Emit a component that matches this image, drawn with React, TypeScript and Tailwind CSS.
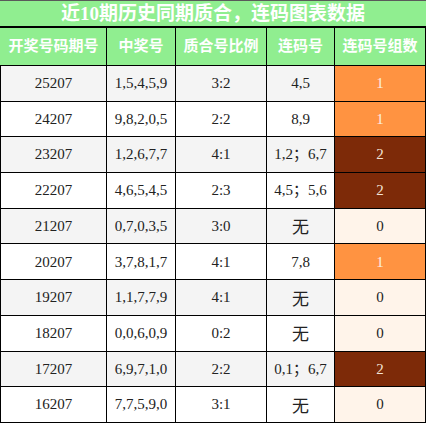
import React from 'react';

type Row = { issue: string; nums: string; ratio: string; pairs: string; count: number };

const rows: Row[] = [
  { issue: '25207', nums: '1,5,4,5,9', ratio: '3:2', pairs: '4,5', count: 1 },
  { issue: '24207', nums: '9,8,2,0,5', ratio: '2:2', pairs: '8,9', count: 1 },
  { issue: '23207', nums: '1,2,6,7,7', ratio: '4:1', pairs: '1,2；6,7', count: 2 },
  { issue: '22207', nums: '4,6,5,4,5', ratio: '2:3', pairs: '4,5；5,6', count: 2 },
  { issue: '21207', nums: '0,7,0,3,5', ratio: '3:0', pairs: '无', count: 0 },
  { issue: '20207', nums: '3,7,8,1,7', ratio: '4:1', pairs: '7,8', count: 1 },
  { issue: '19207', nums: '1,1,7,7,9', ratio: '4:1', pairs: '无', count: 0 },
  { issue: '18207', nums: '0,0,6,0,9', ratio: '0:2', pairs: '无', count: 0 },
  { issue: '17207', nums: '6,9,7,1,0', ratio: '2:2', pairs: '0,1；6,7', count: 2 },
  { issue: '16207', nums: '7,7,5,9,0', ratio: '3:1', pairs: '无', count: 0 },
];

const headers = ['开奖号码期号', '中奖号', '质合号比例', '连码号', '连码号组数'];

const countCell: Record<number, string> = {
  0: 'bg-[#fff4ea] text-[#222]',
  1: 'bg-[#ff9341] text-[#fbeee2]',
  2: 'bg-[#7d2a08] text-[#f3e2d6]',
};

const font = { fontFamily: '"Liberation Serif", "Noto Sans CJK SC", serif' };

export default function App() {
  return (
    <div className="w-[426px] h-[424px] overflow-hidden bg-white" style={font}>
      {/* title */}
      <div className="h-[28px] bg-[#90ee90] border-t border-[#5a5a5a] border-b-2 border-b-black flex items-center justify-center">
        <span className="text-white text-[19px] font-bold leading-none">近10期历史同期质合，连码图表数据</span>
      </div>

      <div className="grid grid-cols-[107px_69px_91px_68px_91px]">
        {headers.map((h, i) => (
          <div
            key={h}
            className={`h-[38px] bg-[#90ee90] border-b border-r border-black flex items-center justify-center text-white text-[15px] font-bold ${i === 0 ? 'pl-px' : ''}`}
          >
            {h}
          </div>
        ))}

        {rows.map((r, idx) => {
          const bg = idx % 2 === 0 ? 'bg-[#f4f4f4]' : 'bg-white';
          const cell = 'h-[35.7px] border-b border-r border-black flex items-center justify-center text-[15px] text-[#222]';
          return (
            <React.Fragment key={r.issue}>
              <div className={`${cell} ${bg} border-l`}>{r.issue}</div>
              <div className={`${cell} ${bg}`}>{r.nums}</div>
              <div className={`${cell} ${bg}`}>{r.ratio}</div>
              <div className={`${cell} ${bg}`}>
                {r.pairs === '无' ? <span className="text-[17px] pt-1">无</span> : r.pairs}
              </div>
              <div className={`${cell} ${countCell[r.count]}`}>{r.count}</div>
            </React.Fragment>
          );
        })}
      </div>
    </div>
  );
}
